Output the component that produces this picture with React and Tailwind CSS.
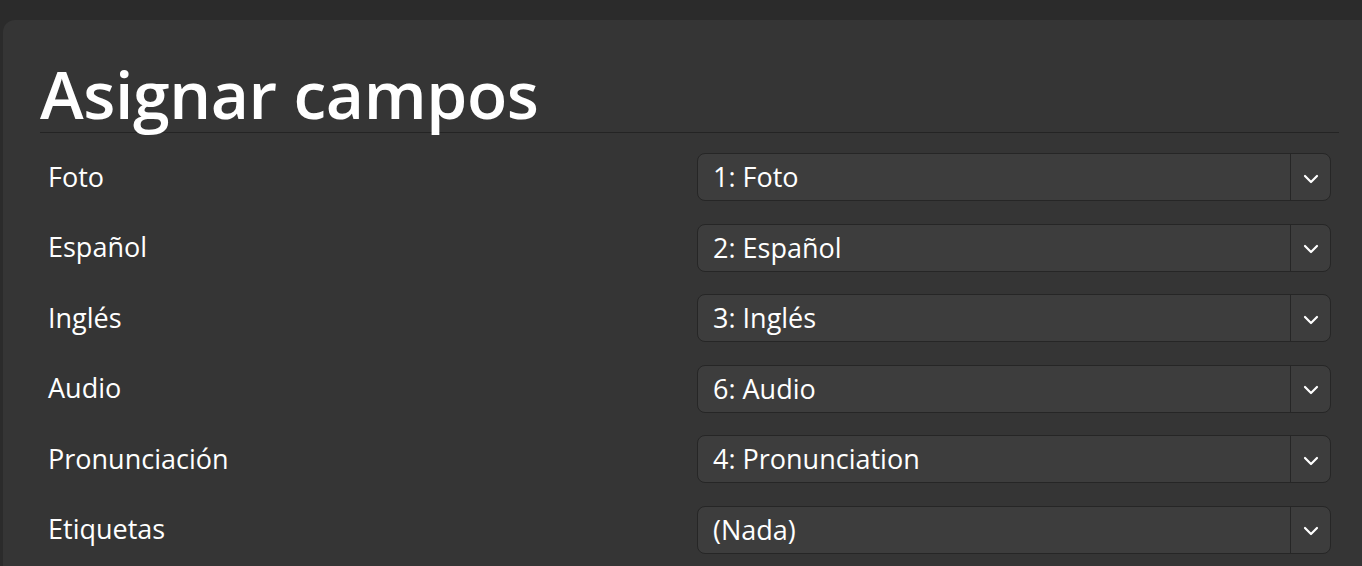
const rows = [
  ["Foto", "1: Foto"],
  ["Español", "2: Español"],
  ["Inglés", "3: Inglés"],
  ["Audio", "6: Audio"],
  ["Pronunciación", "4: Pronunciation"],
  ["Etiquetas", "(Nada)"],
];

function Chevron() {
  return (
    <svg width="16" height="10" viewBox="0 0 16 10" fill="none">
      <path d="M2 2l6 6 6-6" stroke="#ffffff" strokeWidth="2.2" strokeLinecap="round" strokeLinejoin="round" />
    </svg>
  );
}

export default function App() {
  return (
    <div
      className="h-[566px] overflow-hidden bg-[#2b2b2b] pt-[20px] pl-[3px]"
      style={{ fontFamily: '"Segoe UI", "Open Sans", "Noto Sans", sans-serif' }}
    >
      <div className="h-[600px] w-[1400px] rounded-tl-[12px] bg-[#353535] pl-[37px] text-white">
        <div className="w-[1299px]">
          <h1 className="h-[113px] border-b border-[#242424] pt-[40px] text-[66px] font-semibold leading-[66px] tracking-[-0.4px]">
            Asignar campos
          </h1>
          <div className="mt-[20px] flex flex-col gap-[23.6px] px-2">
            {rows.map(([label, value]) => (
              <div key={label} className="grid h-[47px] grid-cols-[649px_1fr] items-center">
                <span className="text-[27px] leading-none pb-[2px]">{label}</span>
                <div className="flex h-[48px] items-stretch rounded-[8px] border border-[#262626] bg-[#3d3d3d]">
                  <span className="flex flex-1 items-center pl-[15px] text-[27px] leading-none pb-[1px]">
                    {value}
                  </span>
                  <span className="flex w-[40px] items-center justify-center border-l border-[#262626] pt-[3px]">
                    <Chevron />
                  </span>
                </div>
              </div>
            ))}
          </div>
        </div>
      </div>
    </div>
  );
}
